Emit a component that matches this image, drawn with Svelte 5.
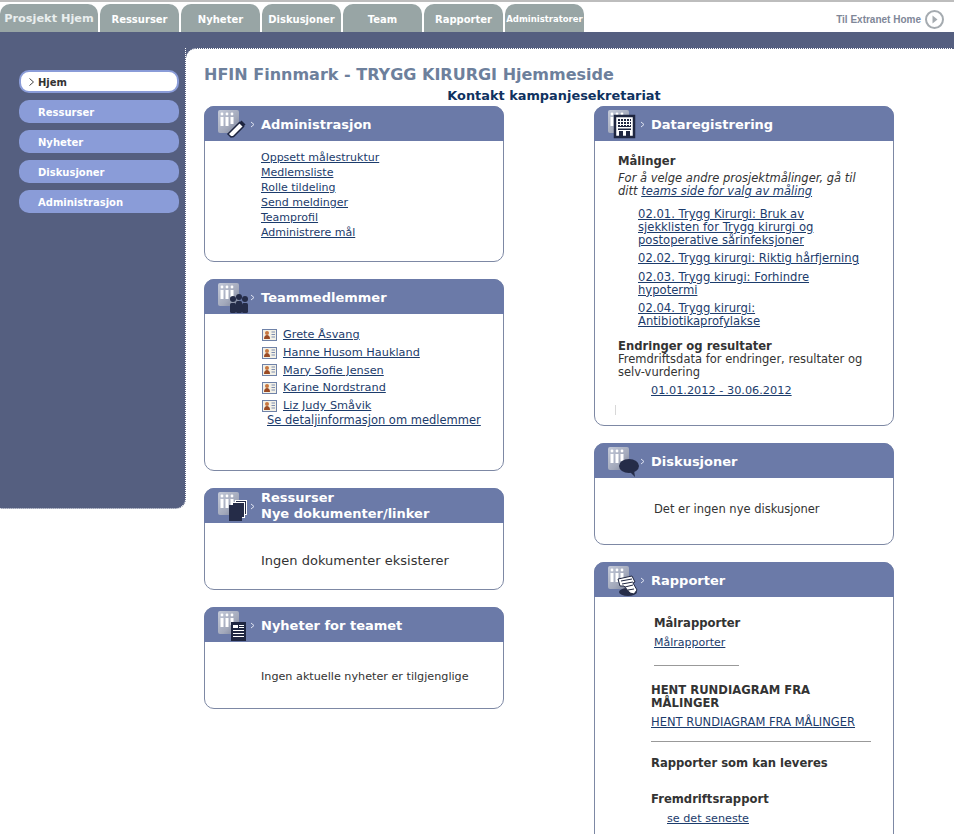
<script>
    const tabs = [
        { label: "Prosjekt Hjem", cls: "first" },
        { label: "Ressurser" },
        { label: "Nyheter" },
        { label: "Diskusjoner" },
        { label: "Team" },
        { label: "Rapporter" },
        { label: "Administratorer", cls: "small" }
    ];
    const nav = ["Hjem", "Ressurser", "Nyheter", "Diskusjoner", "Administrasjon"];
    const adminLinks = [
        "Oppsett målestruktur",
        "Medlemsliste",
        "Rolle tildeling",
        "Send meldinger",
        "Teamprofil",
        "Administrere mål"
    ];
    const members = [
        "Grete Åsvang",
        "Hanne Husom Haukland",
        "Mary Sofie Jensen",
        "Karine Nordstrand",
        "Liz Judy Småvik"
    ];
    const measures = [
        "02.01. Trygg Kirurgi: Bruk av sjekklisten for Trygg kirurgi og postoperative sårinfeksjoner",
        "02.02. Trygg kirurgi: Riktig hårfjerning",
        "02.03. Trygg kirugi: Forhindre hypotermi",
        "02.04. Trygg kirurgi: Antibiotikaprofylakse"
    ];
</script>

{#snippet icon(kind)}
    <svg class="icon" width="34" height="32" viewBox="0 0 34 32">
        <defs>
            <linearGradient id="silver-{kind}" x1="0" y1="0" x2="1" y2="1">
                <stop offset="0" stop-color="#c4cad9" />
                <stop offset="0.6" stop-color="#a3a9bb" />
                <stop offset="1" stop-color="#777f96" />
            </linearGradient>
        </defs>
        <rect x="0" y="1" width="21" height="23" rx="2" fill="url(#silver-{kind})" />
        <g fill="#fff">
            <circle cx="4" cy="5" r="1.400" />
            <circle cx="9" cy="5" r="1.400" />
            <circle cx="14" cy="5" r="1.400" />
            <rect x="2.500" y="8" width="3" height="9" />
            <rect x="7.500" y="8" width="3" height="9" />
            <rect x="12.500" y="8" width="3" height="7" />
        </g>
        {#if kind === "edit"}
            <path d="M10 25l3 3 2.500-.5 10-10-4-4-10 10z" fill="#fff" stroke="#1e2540" stroke-width="1.500" />
            <path d="M21.500 13.500l4 4 2-2-4-4z" fill="#1e2540" />
        {:else if kind === "people"}
            <g fill="#252c48">
                <circle cx="15" cy="17" r="3" />
                <circle cx="21" cy="15" r="3" />
                <circle cx="27" cy="17" r="3" />
                <rect x="12" y="21" width="6" height="10" rx="1.500" />
                <rect x="18" y="19" width="6" height="12" rx="1.500" />
                <rect x="24" y="21" width="6" height="10" rx="1.500" />
            </g>
        {:else if kind === "docs"}
            <rect x="17.500" y="9.500" width="11" height="14" fill="#252c48" stroke="#fff" />
            <rect x="14.500" y="11.500" width="12" height="15" fill="#252c48" stroke="#fff" />
            <rect x="11" y="14" width="13" height="16" fill="#252c48" />
        {:else if kind === "news"}
            <rect x="13" y="12" width="15" height="19" fill="#1f2640" />
            <g fill="#fff">
                <rect x="15" y="15" width="5" height="3" />
                <rect x="21" y="15" width="5" height="1" />
                <rect x="21" y="17" width="5" height="1" />
                <rect x="15" y="20" width="11" height="1" />
                <rect x="15" y="23" width="11" height="1" />
                <rect x="15" y="26" width="11" height="1" />
            </g>
        {:else if kind === "data"}
            <rect x="7" y="7" width="19" height="21" fill="#fff" stroke="#1f2640" stroke-width="2.500" />
            <g fill="#1f2640">
                <rect x="10" y="10" width="13" height="8" />
                <rect x="10" y="19.500" width="13" height="1.500" />
                <rect x="11" y="22" width="4" height="5" />
                <rect x="18" y="22" width="4" height="5" />
            </g>
            <g fill="#fff">
                <rect x="12" y="10" width="1" height="7" />
                <rect x="15" y="10" width="1" height="7" />
                <rect x="18" y="10" width="1" height="7" />
                <rect x="21" y="10" width="1" height="7" />
                <rect x="10" y="12" width="13" height="1" />
                <rect x="10" y="15" width="13" height="1" />
            </g>
        {:else if kind === "talk"}
            <ellipse cx="21" cy="20" rx="10" ry="7" fill="#252c48" />
            <path d="M21 25l6 6-1-7z" fill="#252c48" />
        {:else if kind === "report"}
            <ellipse cx="20" cy="27" rx="9" ry="4" fill="#252c48" />
            <path d="M10 14l14-3 3 6-2 1 4 7-3 4-4-1-6-7-4 0z" fill="#fff" stroke="#1f2640" />
            <path d="M13 16l11-2M14 19l11-2M17 22l8-2M20 25l6-1" stroke="#1f2640" fill="none" />
        {/if}
    </svg>
    <svg class="chevron" width="5" height="7" viewBox="0 0 5 7">
        <path d="M1 1l3 2.500-3 2.500" fill="none" stroke="#dfe4f2" stroke-width="1" />
    </svg>
{/snippet}

{#snippet vcard()}
    <svg class="vcard" width="15" height="12" viewBox="0 0 15 12">
        <rect x="0.500" y="0.500" width="14" height="11" fill="#f2f0e6" stroke="#6f82a8" />
        <circle cx="5" cy="4" r="2" fill="#c8763f" />
        <path d="M2 10c0-3 1.500-4 3-4s3 1 3 4z" fill="#9a4a24" />
        <path d="M9.500 3h3.500M9.500 5.500h3.500M9.500 8h3.500" stroke="#7f8eb0" />
    </svg>
{/snippet}

<div class="topline"></div>
<header class="tabs-row">
    <nav class="tabs">
        {#each tabs as tab}
            <a class="tab {tab.cls ?? ''}" href="#top">{tab.label}</a>
        {/each}
    </nav>
    <a class="extranet" href="#top">
        Til Extranet Home
        <svg width="19" height="19" viewBox="0 0 19 19">
            <circle cx="9.500" cy="9.500" r="8.500" fill="#fff" stroke="#a5abb0" stroke-width="2" />
            <path d="M7.500 5.500l5 4-5 4z" fill="#a5abb0" />
        </svg>
    </a>
</header>
<div class="bar"></div>

<div class="layout">
    <aside class="sidebar">
        {#each nav as item, i}
            <a class="nav-item" class:active={i === 0} href="#top">
                {#if i === 0}
                    <svg width="5" height="8" viewBox="0 0 5 8">
                        <path d="M0.500 0.500l4 3.500-4 3.500" fill="none" stroke="#444" />
                    </svg>
                {/if}
                {item}
            </a>
        {/each}
    </aside>

    <div class="main-wrap">
        <main class="main">
            <h1>HFIN Finnmark - TRYGG KIRURGI Hjemmeside</h1>
            <a class="contact" href="#top">Kontakt kampanjesekretariat</a>

            <div class="columns">
                <div class="column">
                    <section class="card admin">
                        <h2>{@render icon("edit")}<span>Administrasjon</span></h2>
                        <ul class="links">
                            {#each adminLinks as link}
                                <li><a href="#top">{link}</a></li>
                            {/each}
                        </ul>
                    </section>

                    <section class="card team">
                        <h2>{@render icon("people")}<span>Teammedlemmer</span></h2>
                        <ul class="members">
                            {#each members as member}
                                <li>{@render vcard()}<a href="#top">{member}</a></li>
                            {/each}
                        </ul>
                        <a class="details" href="#top">Se detaljinformasjon om medlemmer</a>
                    </section>

                    <section class="card short">
                        <h2 class="two-line">{@render icon("docs")}<span>Ressurser<br />Nye dokumenter/linker</span></h2>
                        <p class="empty big">Ingen dokumenter eksisterer</p>
                    </section>

                    <section class="card short">
                        <h2>{@render icon("news")}<span>Nyheter for teamet</span></h2>
                        <p class="empty">Ingen aktuelle nyheter er tilgjenglige</p>
                    </section>
                </div>

                <div class="column">
                    <section class="card data">
                        <h2>{@render icon("data")}<span>Dataregistrering</span></h2>
                        <div class="data-body">
                            <h3>Målinger</h3>
                            <p class="intro"><em>For å velge andre prosjektmålinger, gå til ditt <a href="#top">teams side for valg av måling</a></em></p>
                            <ul class="measures">
                                {#each measures as measure}
                                    <li><a href="#top">{measure}</a></li>
                                {/each}
                            </ul>
                            <h3 class="changes">Endringer og resultater</h3>
                            <p>Fremdriftsdata for endringer, resultater og selv-vurdering</p>
                            <a class="period" href="#top">01.01.2012 - 30.06.2012</a>
                            <div class="tick"></div>
                        </div>
                    </section>

                    <section class="card short">
                        <h2>{@render icon("talk")}<span>Diskusjoner</span></h2>
                        <p class="empty talk">Det er ingen nye diskusjoner</p>
                    </section>

                    <section class="card reports">
                        <h2>{@render icon("report")}<span>Rapporter</span></h2>
                        <div class="reports-body">
                            <div class="goal">
                                <h3>Målrapporter</h3>
                                <a href="#top">Målrapporter</a>
                                <hr class="hr-short" />
                            </div>
                            <h3 class="pie">HENT RUNDIAGRAM FRA MÅLINGER</h3>
                            <a class="pie-link" href="#top">HENT RUNDIAGRAM FRA MÅLINGER</a>
                            <hr class="hr-long" />
                            <h3 class="deliver">Rapporter som kan leveres</h3>
                            <h3 class="progress">Fremdriftsrapport</h3>
                            <a class="latest" href="#top">se det seneste</a>
                        </div>
                    </section>
                </div>
            </div>
        </main>
    </div>
</div>

<style>
    :global(html),
    :global(body) {
        height: 834px;
        overflow: hidden;
        background: #fff;
    }

    :global(body) {
        font-family: "DejaVu Sans", Verdana, sans-serif;
        font-size: 11px;
        color: #333;
    }

    a {
        color: #1c3c6c;
    }

    .topline {
        height: 2px;
        background: #bdbdbd;
    }

    /* Tabs */
    .tabs-row {
        display: flex;
        justify-content: space-between;
        align-items: flex-end;
        height: 30px;
    }
    .tabs {
        display: flex;
        gap: 2px;
        padding-top: 2px;
    }
    .tab {
        display: flex;
        align-items: center;
        justify-content: center;
        box-sizing: border-box;
        width: 79px;
        height: 28px;
        padding-top: 3px;
        background: #98a5a5;
        border-radius: 10px 10px 0 0;
        color: #fff;
        font-size: 10px;
        font-weight: bold;
        text-decoration: none;
    }
    .tab.first {
        width: 98px;
        padding-top: 1px;
        color: #e9eeee;
        font-size: 11.300px;
        white-space: nowrap;
    }
    .tab.small {
        padding-top: 1px;
        font-size: 8.500px;
    }
    .extranet {
        display: flex;
        align-items: center;
        gap: 4px;
        height: 28px;
        padding: 2px 10px 0 0;
        box-sizing: border-box;
        font-family: "Liberation Sans", Arial, sans-serif;
        font-size: 10px;
        font-weight: bold;
        color: #7f8798;
        text-decoration: none;
    }

    .bar {
        height: 16px;
        background: #555f80;
    }

    .layout {
        display: flex;
        align-items: flex-start;
    }

    /* Left navigation */
    .sidebar {
        display: flex;
        flex-direction: column;
        gap: 7px;
        box-sizing: border-box;
        flex: none;
        width: 186px;
        height: 461px;
        padding: 22px 6px 0 19px;
        background: #555f80;
        border-right: 1px dotted #fff;
        border-bottom: 1px dotted #fff;
        border-bottom-right-radius: 10px;
    }
    .nav-item {
        display: flex;
        align-items: center;
        height: 23px;
        padding: 1px 0 0 19px;
        border-radius: 10px;
        background: #8a9cd8;
        color: #fff;
        font-weight: bold;
        font-size: 10px;
        text-decoration: none;
        box-sizing: border-box;
    }
    .nav-item.active {
        position: relative;
        background: #fff;
        border: 2px solid #8a9cd8;
        color: #333;
        padding-left: 17px;
    }
    .nav-item.active svg {
        position: absolute;
        left: 8px;
        top: 6px;
    }

    /* Main panel */
    .main-wrap {
        flex: 1;
        background: linear-gradient(#555f80, #555f80) no-repeat 0 0 / 12px 12px;
    }
    .main {
        box-sizing: border-box;
        height: 786px;
        padding: 16px 0 0 18px;
        background: #fff;
        border-top: 1px dotted #555f80;
        border-top-left-radius: 10px;
    }
    h1 {
        margin: 0;
        font-size: 16px;
        line-height: 20px;
        font-weight: bold;
        color: #6d809c;
    }
    .contact {
        display: block;
        width: 700px;
        margin-top: 2px;
        text-align: center;
        font-size: 12.900px;
        line-height: 18px;
        font-weight: bold;
        color: #0f3260;
        text-decoration: none;
    }

    .columns {
        display: flex;
        gap: 90px;
        margin-top: 1px;
    }
    .column {
        display: flex;
        flex-direction: column;
        gap: 17px;
        width: 300px;
    }

    /* Cards */
    .card {
        box-sizing: border-box;
        border: 1px solid #7d88a4;
        border-radius: 10px;
        background: #fff;
    }
    .card h2 {
        display: flex;
        align-items: center;
        box-sizing: border-box;
        height: 35px;
        margin: -1px -1px 0;
        padding: 1px 0 0 14px;
        background: #6b7aa8;
        border-radius: 10px 10px 0 0;
        color: #fff;
        font-size: 13px;
        font-weight: bold;
    }
    .card h2.two-line {
        padding-top: 1px;
        line-height: 16px;
    }
    .icon {
        flex: none;
        overflow: visible;
        margin-top: 1px;
    }
    .chevron {
        flex: none;
        margin: 0 6px 0 -2px;
    }

    .admin {
        height: 156px;
    }
    .team {
        height: 192px;
    }
    .short {
        height: 102px;
    }

    .links {
        margin: 0;
        padding: 9px 0 0 56px;
        list-style: none;
        line-height: 15px;
    }

    .members {
        margin: 0;
        padding: 12px 0 0 57px;
        list-style: none;
    }
    .members li {
        display: flex;
        align-items: center;
        gap: 6px;
        height: 17.700px;
        font-size: 11.300px;
    }
    .vcard {
        flex: none;
    }
    .details {
        display: block;
        margin: -1px 0 0 62px;
        font-size: 11.500px;
        line-height: 15px;
    }

    .empty {
        margin: 27px 0 0 56px;
        font-size: 11.200px;
        line-height: 15px;
    }
    .empty.big {
        margin-top: 30px;
        font-size: 13px;
    }
    .empty.talk {
        margin: 24px 0 0 59px;
        font-size: 11.500px;
    }

    /* Dataregistrering */
    .data {
        height: 320px;
    }
    .data-body {
        position: relative;
        padding: 14px 20px 0 23px;
        font-size: 11.500px;
        line-height: 13px;
    }
    h3 {
        margin: 0;
        font-size: 11.600px;
        line-height: 13px;
        font-weight: bold;
    }
    .data-body p {
        margin: 0;
    }
    .intro {
        padding-top: 4px;
    }
    .measures {
        margin: 10px 0 0;
        padding: 0 10px 0 20px;
        list-style: none;
        font-size: 11.600px;
    }
    .measures li {
        margin-bottom: 5.400px;
    }
    .changes {
        margin-top: 12px;
    }
    .period {
        display: block;
        margin: 5px 0 0 33px;
        font-size: 11.300px;
    }
    .tick {
        position: absolute;
        left: 20px;
        top: 264px;
        width: 1px;
        height: 10px;
        background: #d8d8d8;
    }

    /* Rapporter */
    .reports {
        height: 320px;
    }
    .reports-body {
        padding: 20px 22px 0 56px;
    }
    .goal {
        padding-left: 3px;
    }
    .goal a {
        display: block;
        margin-top: 6px;
        line-height: 13px;
    }
    .hr-short {
        width: 85px;
        margin: 16px 0 0;
        border: 0;
        border-top: 1px solid #999;
    }
    .pie {
        margin-top: 18px;
    }
    .pie-link {
        display: block;
        margin-top: 6px;
        line-height: 13px;
        font-size: 11.500px;
    }
    .hr-long {
        width: 220px;
        margin: 12px 0 0;
        border: 0;
        border-top: 1px solid #999;
    }
    .deliver {
        margin-top: 15px;
    }
    .progress {
        margin-top: 23px;
    }
    .latest {
        display: block;
        margin: 6px 0 0 16px;
        line-height: 13px;
        font-size: 11.200px;
    }
</style>
